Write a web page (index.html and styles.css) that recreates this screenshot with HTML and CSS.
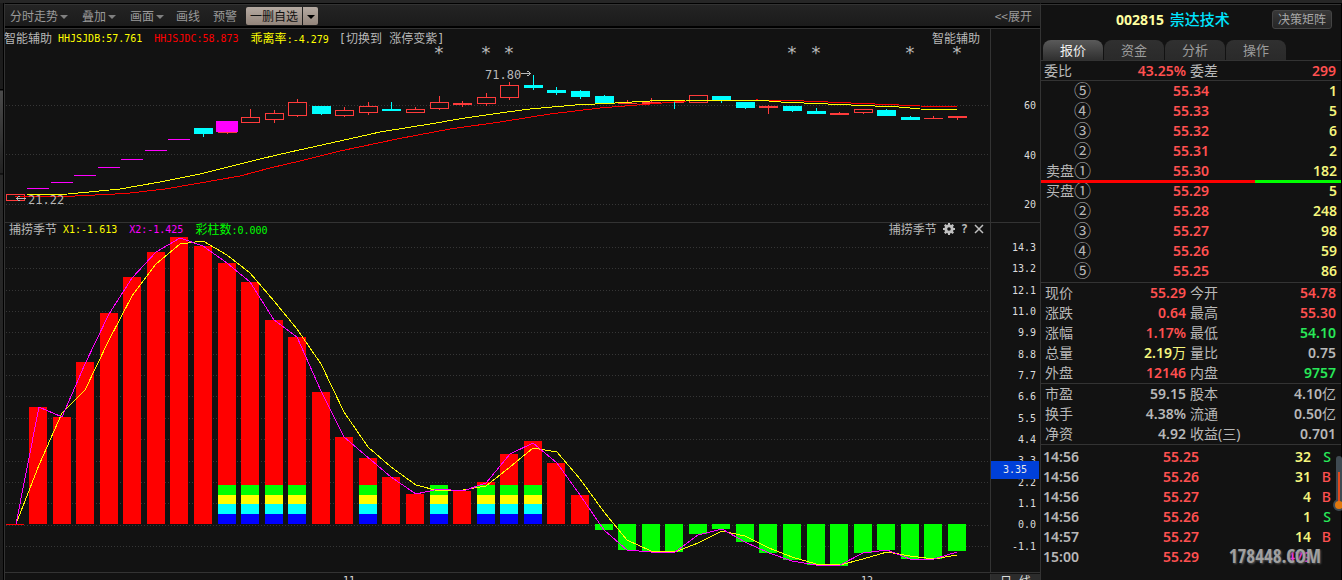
FILE: index.html
```html
<!DOCTYPE html>
<html lang="zh-CN">
<head>
<meta charset="utf-8">
<title>崇达技术 002815</title>
<link rel="stylesheet" href="styles.css">
</head>
<body>
<div class="app">
  <div class="rail"></div>
  <main class="charts">
    <nav class="toolbar">
      <button class="tool caret">分时走势</button>
      <button class="tool caret">叠加</button>
      <button class="tool caret">画面</button>
      <button class="tool">画线</button>
      <button class="tool">预警</button>
      <div class="split">
        <button class="split-main">一删自选</button>
        <button class="split-more caret" aria-label="更多"></button>
      </div>
      <button class="tool expand">&lt;&lt;展开</button>
    </nav>

    <section class="pane pane-price">
      <div class="plot">
        <svg class="canvas" viewBox="5 29 985 193" preserveAspectRatio="none" shape-rendering="crispEdges">
          <g class="grid"><path d="M6 105.5H990M6 154.5H990M6 204.5H990"/></g>
          <g class="dash"><path d="M27 188.5h22M51 182.5h22M74 175.5h22M98 167.5h22M121 159.5h22M145 150.5h22M168 139.5h22"/></g>
          <g class="hollow">
            <path d="M6.500 194.500h18v6h-18z"/>
            <path d="M241.500 117.500h18v5h-18zM250.500 109v8"/>
            <path d="M265.500 113.500h18v6h-18zM274.500 110v3M274.500 120v3"/>
            <path d="M288.500 102.500h18v13h-18zM297.500 99v3M297.500 116v1"/>
            <path d="M335.500 110.500h18v5h-18zM344.500 107v3M344.500 116v1"/>
            <path d="M359.500 106.500h18v6h-18zM368.500 102v4M368.500 113v2"/>
            <path d="M406.500 109.500h18v3h-18zM415.500 107v2"/>
            <path d="M430.500 102.500h18v6h-18zM439.500 96v6M439.500 109v1"/>
            <path d="M477.500 97.500h18v6h-18zM486.500 93v4M486.500 104v2"/>
            <path d="M500.500 85.500h18v12h-18zM509.500 82v3M509.500 98v2"/>
            <path d="M689.500 95.500h18v7h-18z"/>
            <path d="M854.500 109.500h18v3h-18zM863.500 113v1"/>
          </g>
          <g class="rise">
            <path d="M218 132h19v1h-19zM227 133h1v1h-1z"/>
            <path d="M453 103h19v2h-19zM462 101h1v6h-1z"/>
            <path d="M618 103h19v1h-19zM627 100h1v4h-1z"/>
            <path d="M642 102h19v2h-19zM651 98h1v4h-1zM665 102h19v1h-19z"/>
            <path d="M759 106h19v2h-19zM768 105h1v9h-1z"/>
            <path d="M830 113h19v2h-19zM839 112h1v1h-1z"/>
            <path d="M924 118h19v1h-19zM933 116h1v2h-1z"/>
            <path d="M948 116h19v2h-19zM957 118h1v2h-1z"/>
          </g>
          <path class="limit" d="M216 121h22v11h-22z"/>
          <g class="fall">
            <path d="M194 128h19v6h-19zM203 134h1v3h-1z"/>
            <path d="M312 106h19v8h-19zM321 114h1v1h-1z"/>
            <path d="M382 109h19v2h-19zM391 102h1v7h-1z"/>
            <path d="M524 85h19v3h-19zM533 75h1v15h-1z"/>
            <path d="M547 90h19v3h-19zM556 87h1v8h-1z"/>
            <path d="M571 91h19v6h-19zM580 90h1v9h-1z"/>
            <path d="M595 96h19v8h-19zM604 95h1v1h-1z"/>
            <path d="M674 100h1v9h-1z"/>
            <path d="M712 96h19v5h-19zM721 101h1v2h-1z"/>
            <path d="M736 102h19v6h-19zM745 108h1v1h-1z"/>
            <path d="M783 106h19v5h-19zM792 111h1v1h-1z"/>
            <path d="M807 111h19v3h-19zM816 108h1v3h-1z"/>
            <path d="M877 110h19v6h-19zM886 109h1v1h-1z"/>
            <path d="M901 117h19v3h-19zM910 116h1v1h-1z"/>
          </g>
          <polyline class="ma-red" points="15,196 75,196 115,194 130,193 165,189 200,183 240,176 270,168 300,161 340,151 397,139 450,129 500,122 550,114 600,108 650,104 686,101 757,100 804,101 828,102 851,103 875,104 899,105 920,106 957,107"/>
          <polyline class="ma-yellow" points="27,195 68,194 120,189 160,182 200,174 240,164 260,159 290,152 340,141 380,132 430,124 465,118 500,113 530,109 575,105 615,103 650,101 686,100 757,100 781,102 804,103 828,104 851,105 875,106 899,107 920,109 957,110"/>
          <g class="mark">
            <path d="M521 73.500h10M527 71.500h2M527 75.500h2M529 72.500h1M529 74.500h1"/>
            <path d="M16 198.500h10M18 196.500h2M18 200.500h2M17 197.500h1M17 199.500h1"/>
          </g>
          <text class="mark-text" x="485" y="79">71.80</text>
          <text class="mark-text" x="28" y="204">21.22</text>
          <g class="star">
            <text x="439" y="59">*</text><text x="486" y="59">*</text><text x="509" y="59">*</text>
            <text x="792" y="59">*</text><text x="816" y="59">*</text><text x="910" y="59">*</text><text x="957" y="59">*</text>
          </g>
        </svg>
        <header class="legend">
          <span class="name">智能辅助</span>
          <span class="yellow">HHJSJDB:57.761</span>
          <span class="red">HHJSJDC:58.873</span>
          <span class="yellow"><span class="cjk">乖离率</span>:-4.279</span>
          <span class="name">[切换到 涨停变紫]</span>
          <span class="legend-end">智能辅助</span>
        </header>
      </div>
      <div class="axis axis-price"><span>60</span><span>40</span><span>20</span></div>
    </section>

    <section class="pane pane-season">
      <div class="plot">
        <svg class="canvas" viewBox="5 223 985 349" preserveAspectRatio="none" shape-rendering="crispEdges">
          <g class="grid"><path d="M6 247.500H990M6 268.500H990M6 290.500H990M6 311.500H990M6 332.500H990M6 354.500H990M6 375.500H990M6 396.500H990M6 418.500H990M6 439.500H990M6 461.500H990M6 482.500H990M6 503.500H990M6 525.500H990M6 546.500H990"/></g>
          <path class="bar-up" d="M6 524h18v1h-18zM29 407h18V524h-18zM53 417h18V524h-18zM76 362h18V524h-18zM100 313h18V524h-18zM123 277h18V524h-18zM147 252h18V524h-18zM170 237h18V524h-18zM194 246h18V524h-18zM218 263h18V524h-18zM241 282h18V524h-18zM265 320h18V524h-18zM288 337h18V524h-18zM312 392h18V524h-18zM335 437h18V524h-18zM359 458h18V524h-18zM382 477h18V524h-18zM406 494h18V524h-18zM453 491h18V524h-18zM477 482h18V524h-18zM500 454h18V524h-18zM524 441h18V524h-18zM547 463h18V524h-18zM571 495h18V524h-18z"/>
          <path class="bar-down" d="M595 524h18V530h-18zM618 524h18V550h-18zM642 524h18V551h-18zM665 524h18V552h-18zM689 524h18V534h-18zM712 524h18V529h-18zM736 524h18V542h-18zM759 524h18V553h-18zM783 524h18V560h-18zM807 524h18V565h-18zM830 524h18V566h-18zM854 524h18V553h-18zM877 524h18V550h-18zM901 524h18V559h-18zM924 524h18V559h-18zM948 524h18V551h-18z"/>
          <defs>
            <g id="stack">
              <rect width="18" height="10" fill="#00ff00"/>
              <rect y="10" width="18" height="9" fill="#ffff00"/>
              <rect y="19" width="18" height="10" fill="#00ffff"/>
              <rect y="29" width="18" height="10" fill="#0000ff"/>
            </g>
          </defs>
          <use href="#stack" x="218" y="485"/><use href="#stack" x="241" y="485"/><use href="#stack" x="265" y="485"/>
          <use href="#stack" x="288" y="485"/><use href="#stack" x="359" y="485"/><use href="#stack" x="430" y="485"/>
          <use href="#stack" x="477" y="485"/><use href="#stack" x="500" y="485"/><use href="#stack" x="524" y="485"/>
          <polyline class="ma-yellow" points="16,524 39,465 62,413 85,390 109,340 132,296 156,264 180,244 203,241 227,255 250,273 274,301 297,329 321,364 344,412 368,447 391,467 416,485 439,491 463,490 486,486 510,467 533,448 557,452 580,479 604,512 627,540 651,551 675,552 698,543 722,531 745,536 769,548 792,557 816,564 840,565 863,559 887,552 910,556 934,559 957,555"/>
          <polyline class="ma-magenta" points="16,524 39,407 62,417 85,364 109,314 132,278 156,252 180,238 203,246 227,263 250,282 274,320 297,337 321,391 344,437 371,460 391,477 416,494 439,489 463,491 486,483 510,454 533,443 557,463 580,495 604,530 627,550 651,552 675,552 698,535 722,529 745,542 769,553 792,561 816,565 840,565 863,553 887,550 910,559 934,559 957,552"/>
        </svg>
        <header class="legend legend-season">
          <span class="name">捕捞季节</span>
          <span class="yellow">X1:-1.613</span>
          <span class="magenta">X2:-1.425</span>
          <span class="green"><span class="cjk">彩柱数</span>:0.000</span>
          <span class="legend-end">捕捞季节</span>
          <button class="icon" aria-label="设置"><svg width="12" height="12" viewBox="0 0 12 12"><path fill="#c0c0c0" fill-rule="evenodd" d="M5 0h2v1.500l1.300.5L9.500 1 11 2.500 10 3.700l.5 1.300H12v2h-1.500L10 8.300l1 1.200L9.500 11 8.300 10 7 10.500V12H5v-1.500L3.700 10 2.500 11 1 9.500l1-1.200L1.500 7H0V5h1.500L2 3.700 1 2.500 2.500 1l1.200 1L5 1.500zM6 4.200a1.800 1.800 0 1 0 0 3.600 1.800 1.800 0 0 0 0-3.600z"/></svg></button>
          <button class="icon help">?</button>
          <button class="icon" aria-label="关闭"><svg width="10" height="10" viewBox="0 0 10 10"><path fill="none" stroke="#c0c0c0" stroke-width="1.500" d="M1 1l8 8M9 1L1 9"/></svg></button>
        </header>
      </div>
      <div class="axis axis-season">
        <span>14.3</span><span>13.2</span><span>12.1</span><span>11.0</span><span>9.9</span><span>8.8</span><span>7.7</span><span>6.6</span><span>5.5</span><span>4.4</span><span>3.3</span><span>2.2</span><span>1.1</span><span>0.0</span><span>-1.1</span>
        <output class="cursor-value">3.35</output>
      </div>
    </section>

    <footer class="months">
      <div class="month-scale"><span>11</span><span>12</span></div>
      <button class="period">日 线</button>
    </footer>
  </main>

  <aside class="quote">
    <header class="stock">
      <h1 class="stock-name"><span class="code">002815</span> <span class="title">崇达技术</span></h1>
      <button class="matrix">决策矩阵</button>
    </header>
    <nav class="tabs">
      <button class="tab active">报价</button>
      <button class="tab">资金</button>
      <button class="tab">分析</button>
      <button class="tab">操作</button>
    </nav>
    <table class="facts ratio">
      <tr><th>委比</th><td class="up">43.25%</td><th>委差</th><td class="up">299</td></tr>
    </table>
    <div class="book">
      <table class="levels">
        <tr><th><span class="ring">⑤</span></th><td>55.34</td><td>1</td></tr>
        <tr><th><span class="ring">④</span></th><td>55.33</td><td>5</td></tr>
        <tr><th><span class="ring">③</span></th><td>55.32</td><td>6</td></tr>
        <tr><th><span class="ring">②</span></th><td>55.31</td><td>2</td></tr>
        <tr><th>卖盘<span class="ring">①</span></th><td>55.30</td><td>182</td></tr>
      </table>
      <div class="balance"></div>
      <table class="levels">
        <tr><th>买盘<span class="ring">①</span></th><td>55.29</td><td>5</td></tr>
        <tr><th><span class="ring">②</span></th><td>55.28</td><td>248</td></tr>
        <tr><th><span class="ring">③</span></th><td>55.27</td><td>98</td></tr>
        <tr><th><span class="ring">④</span></th><td>55.26</td><td>59</td></tr>
        <tr><th><span class="ring">⑤</span></th><td>55.25</td><td>86</td></tr>
      </table>
    </div>
    <table class="facts">
      <tr><th>现价</th><td class="up">55.29</td><th>今开</th><td class="up">54.78</td></tr>
      <tr><th>涨跌</th><td class="up">0.64</td><th>最高</th><td class="up">55.30</td></tr>
      <tr><th>涨幅</th><td class="up">1.17%</td><th>最低</th><td class="down">54.10</td></tr>
      <tr><th>总量</th><td class="vol">2.19<span class="unit">万</span></td><th>量比</th><td>0.75</td></tr>
      <tr><th>外盘</th><td class="up">12146</td><th>内盘</th><td class="down">9757</td></tr>
    </table>
    <table class="facts">
      <tr><th>市盈</th><td>59.15</td><th>股本</th><td>4.10<span class="unit">亿</span></td></tr>
      <tr><th>换手</th><td>4.38%</td><th>流通</th><td>0.50<span class="unit">亿</span></td></tr>
      <tr><th>净资</th><td>4.92</td><th>收益(三)</th><td>0.701</td></tr>
    </table>
    <div class="tape">
      <table class="ticks">
        <tr><td>14:56</td><td class="up">55.25</td><td class="vol">32</td><td class="down">S</td></tr>
        <tr><td>14:56</td><td class="up">55.26</td><td class="vol">31</td><td class="up">B</td></tr>
        <tr><td>14:56</td><td class="up">55.27</td><td class="vol">4</td><td class="up">B</td></tr>
        <tr><td>14:56</td><td class="up">55.26</td><td class="vol">1</td><td class="down">S</td></tr>
        <tr><td>14:57</td><td class="up">55.27</td><td class="vol">14</td><td class="up">B</td></tr>
        <tr><td>15:00</td><td class="up">55.29</td><td class="big">479</td><td></td></tr>
      </table>
      <svg class="gauge" width="10" height="56" viewBox="0 0 10 56">
        <rect x="3" y="0" width="6" height="50" rx="3" fill="#3f4a52"/>
        <circle cx="6" cy="49" r="6" fill="#3f4a52"/>
        <path d="M5 16h2v30H5z" fill="#e0481c"/>
        <circle cx="6" cy="49" r="4" fill="#e0780f"/>
      </svg>
      <div class="watermark">178448.COM</div>
    </div>
  </aside>
</div>
</body>
</html>
```
FILE: styles.css
```css
* { box-sizing: border-box; }

body {
  margin: 0;
  height: 100vh;
  overflow: hidden;
  background: #121212;
  color: #b8b8b8;
  font: 12px/16px "DejaVu Sans Mono", "Noto Sans CJK SC", monospace;
}

button {
  margin: 0;
  padding: 0;
  border: 0;
  background: none;
  color: inherit;
  font: inherit;
}

table { width: 100%; border-collapse: collapse; table-layout: fixed; }
th, td { padding: 0; height: 20px; line-height: 20px; }
th { font-weight: 400; text-align: left; }

.app {
  display: flex;
  height: 100%;
  border-top: 3px solid #262626;
}

.rail {
  width: 4px;
  border-right: 1px solid #000;
  background: linear-gradient(#1c1c1c 86px, #000 86px, #000 87px, #4a4a4a 88px, #222 170px, #000 171px, #2a2a2a 172px, #1c1c1c 100%);
}

.charts {
  flex: 1;
  min-width: 0;
  display: flex;
  flex-direction: column;
  border-top: 1px solid #000;
  border-left: 1px solid #333;
}

/* toolbar */
.toolbar {
  display: flex;
  align-items: center;
  height: 24px;
  flex: none;
  padding: 0 8px 0 5px;
  border-top: 1px solid #333;
  border-bottom: 2px solid #000;
  background: linear-gradient(#242424, #1b1b1b);
  color: #9a9a9a;
  font-family: "Noto Sans CJK SC", sans-serif;
}
.tool { margin-right: 13px; white-space: nowrap; }
.caret::after {
  content: "";
  display: inline-block;
  margin-left: 2px;
  vertical-align: 2px;
  border: 4px solid transparent;
  border-top-color: #808080;
  border-bottom: 0;
}
.tool.caret { margin-right: 14px; }
.tool + .split { margin-left: -6px; }
.tool:not(.caret) { margin-left: -2px; margin-right: 15px; }
.split { display: flex; gap: 1px; height: 18px; line-height: 18px; color: #111; }
.split-main, .split-more { background: linear-gradient(#b5aaa2, #93857b); }
.split-main { padding: 0 4px; border-radius: 2px 0 0 2px; }
.split-more { width: 15px; border-radius: 0 2px 2px 0; }
.split-more::after { margin: 0; border-top-color: #000; }
.toolbar .expand { margin: 0 0 0 auto; }

/* chart panes */
.pane { display: flex; border-top: 1px solid #333; }
.pane-price { height: 194px; flex: none; }
.pane-season { flex: 1; min-height: 0; }
.plot { position: relative; flex: 1; min-width: 0; }
.canvas { display: block; width: 100%; height: 100%; }
.axis {
  position: relative;
  display: flex;
  flex-direction: column;
  justify-content: space-between;
  width: 50px;
  padding-right: 4px;
  border-left: 1px solid #333;
  color: #dcdcdc;
  font-size: 10px;
  line-height: 16px;
  text-align: right;
}
.axis-price { padding-top: 69px; padding-bottom: 9px; }
.axis-season { padding-top: 17px; padding-bottom: 17px; }
.cursor-value {
  position: absolute;
  top: 238px;
  left: 0;
  right: 1px;
  line-height: 18px;
  background: #0040d8;
  color: #e8e8e8;
  text-align: center;
}

.legend {
  position: absolute;
  top: 0;
  left: -1px;
  right: 10px;
  display: flex;
  gap: 12px;
  height: 20px;
  font-size: 10px;
  line-height: 20px;
  white-space: nowrap;
}
.legend-season { left: 4px; right: 6px; height: 14px; line-height: 14px; }
.name, .legend-end, .cjk { font-size: 12px; }
.legend .name:first-child { margin-right: -6px; }
.legend .yellow + .name { margin-left: -2px; }
.legend-end { margin-left: auto; }
.yellow { color: #ffff00; }
.red { color: #ff0000; }
.magenta { color: #ff00ff; }
.green { color: #00ff00; }
.icon { display: flex; align-items: center; height: 12px; margin-left: -6px; }
.help { font-size: 12px; font-weight: 700; }

.grid { stroke: #363636; stroke-dasharray: 1 2; }
.dash { stroke: #ff00ff; }
.hollow { fill: #121212; stroke: #ff3b3b; }
.rise { fill: #ff3b3b; }
.fall { fill: #00ffff; }
.limit { fill: #ff00ff; }
.bar-up { fill: #ff0000; }
.bar-down { fill: #00ff00; }
.ma-red, .ma-yellow, .ma-magenta { fill: none; stroke-width: 1; }
.ma-red { stroke: #ff0000; }
.ma-yellow { stroke: #ffff00; }
.ma-magenta { stroke: #ff00ff; }
.mark { stroke: #b8b8b8; }
.mark-text { fill: #b8b8b8; font-size: 12px; }
.star { fill: #b8b8b8; font-size: 18px; text-anchor: middle; }

/* time scale */
.months { display: flex; flex: none; height: 8px; overflow: hidden; border-top: 1px solid #333; }
.month-scale {
  flex: 1;
  display: flex;
  justify-content: space-between;
  padding: 0 117px 0 338px;
  color: #dcdcdc;
  font-size: 10px;
}
.period {
  width: 50px;
  height: 16px;
  margin-top: 1px;
  border-left: 1px solid #333;
  background: #2c2c2c;
  color: #dcdcdc;
  line-height: 13px;
}

/* quote panel */
.quote {
  width: 302px;
  flex: none;
  display: flex;
  flex-direction: column;
  border: solid #333;
  border-color: #000 #000 #000 #333;
  border-width: 1px 1px 0 1px;
  font: 14px/20px "Noto Sans", "Noto Sans CJK SC", sans-serif;
}
.stock { display: flex; align-items: center; height: 31px; padding: 0 9px 2px 75px; border-top: 1px solid #333; }
.stock-name { margin: 0; font-size: 14px; line-height: 20px; white-space: nowrap; }
.code { color: #ffffa0; }
.title { margin-left: 2px; color: #00e5ff; font-size: 15px; font-family: "Noto Sans CJK SC", sans-serif; font-weight: 500; }
.matrix {
  width: 60px;
  height: 19px;
  margin-left: auto;
  border: 1px solid #444;
  border-radius: 3px;
  background: linear-gradient(#383838, #262626);
  color: #a8a8a8;
  font: 12px/16px "Noto Sans CJK SC", sans-serif;
}
.tabs { display: flex; gap: 1px; height: 26px; padding: 5px 2px 0; border-bottom: 1px solid #333; }
.tab {
  width: 60px;
  border-radius: 8px 8px 0 0;
  background: linear-gradient(#303030, #2a2a2a);
  color: #9c9c9c;
  font: 13px/20px "Noto Sans CJK SC", sans-serif;
}
.tab.active { background: linear-gradient(#5a5a5a, #303030); color: #f0f0f0; }

.facts { border-bottom: 1px solid #333; }
.facts th { width: 60px; padding-left: 4px; white-space: nowrap; }
.facts td { font-weight: 600; text-align: right; }
.facts td:nth-child(2) { width: 85px; }
.facts td:last-child { padding-right: 5px; }
.facts .unit { font-weight: 400; line-height: 16px; }
.facts.ratio th:first-child { padding-left: 3px; }
.ratio td { height: 19px; line-height: 19px; }
.ratio th { height: 19px; line-height: 19px; }
td.up { color: #ff5050; }
td.down { color: #28e858; }
td.vol { color: #f5f57d; }
td.big { color: #e838e8; }

.book { padding-bottom: 1px; border-bottom: 1px solid #333; }
.levels th { width: 50px; text-align: right; white-space: nowrap; }
.ring { font-size: 17px; line-height: 16px; vertical-align: -1px; font-family: "Noto Sans CJK SC", sans-serif; }
.levels td { font-weight: 600; text-align: right; }
.levels td:nth-child(2) { width: 118px; color: #ff5050; }
.levels td:last-child { padding-right: 4px; color: #f5f57d; }
.balance {
  position: relative;
  height: 3px;
  margin: -1px 0 -2px;
  background: linear-gradient(to right, #ff0000 71.5%, #00ff00 71.5%);
}

.tape { position: relative; flex: 1; padding-top: 2px; }
.ticks td { font-weight: 600; text-align: right; }
.ticks td:first-child { width: 60px; padding-left: 2px; text-align: left; }
.ticks td:nth-child(2) { width: 98px; }
.ticks td:nth-child(3) { width: 112px; }
.ticks td:last-child { padding-right: 10px; font-weight: 500; }
.gauge { position: absolute; top: 11px; right: -2px; }
.watermark {
  position: absolute;
  top: 101px;
  right: 20px;
  color: #a0a0a0;
  font: 700 19px/20px "Open Sans Condensed", "Liberation Sans Narrow", sans-serif;
  text-shadow: 1px 1px 2px #555;
}
```
